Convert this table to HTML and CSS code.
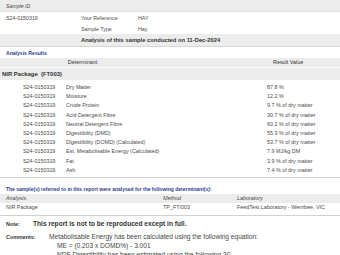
FILE: index.html
```html
<!DOCTYPE html>
<html>
<head>
  <title>Analysis Report</title>
  <link rel="stylesheet" href="styles.css">
</head>
<body>
  <div class="report">
    <div class="band head"><i>Sample ID</i></div>
    <div class="info">
      <span>S24-0150319</span><span>Your Reference</span><span>HAY</span>
      <span></span><span>Sample Type</span><span>Hay</span>
    </div>
    <div class="band conducted">Analysis of this sample conducted on 11-Dec-2024</div>

    <h2 class="section">Analysis Results</h2>
    <div class="band cols">
      <span class="det-head">Determinant</span>
      <span class="res-head">Result Value</span>
    </div>
    <div class="band package">NIR Package&nbsp; (FT003)</div>
    <div class="results">
      <div class="row"><span>S24-0150319</span><span>Dry Matter</span><span>87.8 %</span></div>
      <div class="row"><span>S24-0150319</span><span>Moisture</span><span>12.2 %</span></div>
      <div class="row"><span>S24-0150319</span><span>Crude Protein</span><span>9.7 % of dry matter</span></div>
      <div class="row"><span>S24-0150319</span><span>Acid Detergent Fibre</span><span>30.7 % of dry matter</span></div>
      <div class="row"><span>S24-0150319</span><span>Neutral Detergent Fibre</span><span>60.2 % of dry matter</span></div>
      <div class="row"><span>S24-0150319</span><span>Digestibility (DMD)</span><span>55.3 % of dry matter</span></div>
      <div class="row"><span>S24-0150319</span><span>Digestibility (DOMD) (Calculated)</span><span>53.7 % of dry matter</span></div>
      <div class="row"><span>S24-0150319</span><span>Est. Metabolisable Energy (Calculated)</span><span>7.9 MJ/kg DM</span></div>
      <div class="row"><span>S24-0150319</span><span>Fat</span><span>3.9 % of dry matter</span></div>
      <div class="row"><span>S24-0150319</span><span>Ash</span><span>7.4 % of dry matter</span></div>
    </div>

    <h2 class="section methods-title">The sample(s) referred to in this report were analysed for the following determinant(s):</h2>
    <div class="band methods-head">
      <i>Analysis</i><i>Method</i><i>Laboratory</i>
    </div>
    <div class="methods">
      <span>NIR Package</span><span>TP_FT/003</span><span>FeedTest Laboratory - Werribee, VIC</span>
    </div>

    <div class="note">
      <b class="label">Note:</b>
      <b>This report is not to be reproduced except in full.</b>
    </div>
    <div class="comments">
      <b class="label">Comments:</b>
      <div class="comment-text">
        <p>Metabolisable Energy has been calculated using the following equation:</p>
        <p class="eq">ME = (0.203 x DOMD%) - 3.001</p>
        <p class="eq">NDF Digestibility has been estimated using the following 30</p>
      </div>
    </div>
  </div>
</body>
</html>
```

FILE: styles.css
```css
body {
  margin: 0;
  background-color: white;
  font-family: 'Liberation Sans', Arial, sans-serif;
  color: #4a4a4a;
  overflow: hidden;
}
.report {
  width: 340px;
  font-size: 5.4px;
}
.band {
  background-color: #ececec;
}
.head {
  height: 12px;
  line-height: 12px;
  padding-left: 6px;
  font-size: 5.2px;
  border-bottom: 1px solid #e2e2e2;
  box-sizing: border-box;
}
.info {
  display: grid;
  grid-template-columns: 75px 57px 1fr;
  grid-auto-rows: 11px;
  align-items: center;
  padding-left: 6px;
  font-size: 5.3px;
}
.conducted {
  height: 12px;
  line-height: 12px;
  padding-left: 81px;
  font-weight: 700;
  font-size: 5.8px;
  color: #333;
  border-bottom: 1px solid #d6d6d6;
}
.section {
  margin: 1px 0 0 0;
  height: 10px;
  line-height: 10px;
  padding-left: 6px;
  font-size: 5.1px;
  font-weight: 700;
  color: #2e3b92;
}
.cols {
  display: flex;
  height: 9px;
  line-height: 9px;
  color: #333;
}
.det-head {
  width: 165px;
  text-align: center;
}
.res-head {
  padding-left: 108px;
}
.package {
  margin-top: 1px;
  height: 12px;
  line-height: 12px;
  padding-left: 2px;
  font-weight: 700;
  font-size: 5.9px;
  color: #333;
}
.results {
  padding-top: 3px;
  padding-bottom: 2px;
  border-bottom: 1px solid #d0d0d0;
}
.row {
  display: grid;
  grid-template-columns: 43px 201px 1fr;
  height: 9.2px;
  line-height: 9.2px;
  padding-left: 23px;
}
.methods-title {
  margin-top: 6px;
  font-size: 5px;
}
.methods-head,
.methods {
  display: grid;
  grid-template-columns: 157px 74px 1fr;
  padding-left: 6px;
  height: 9px;
  line-height: 9px;
}
.methods {
  padding-top: 0.5px;
  padding-bottom: 3px;
  border-bottom: 1px solid #d0d0d0;
}
.note,
.comments {
  display: flex;
  padding-left: 6px;
  font-size: 6.6px;
  color: #333;
}
.note {
  margin-top: 2.5px;
  height: 10px;
  line-height: 10px;
}
.label {
  width: 27px;
  flex-shrink: 0;
  font-size: 5.4px;
}
.comments {
  margin-top: 4.5px;
  line-height: 8.6px;
  color: #444;
}
.comments .label {
  width: 43px;
  color: #333;
}
.comment-text p {
  margin: 0;
}
.comment-text .eq {
  padding-left: 8px;
}
```
